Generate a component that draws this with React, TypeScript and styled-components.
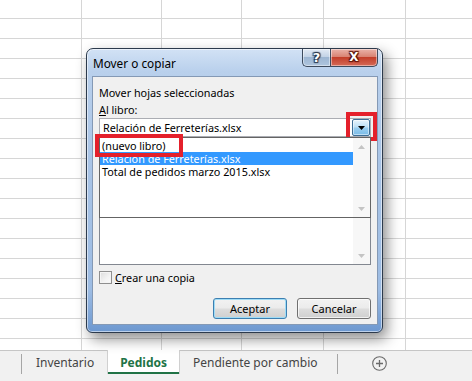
import React from 'react'
import styled, { createGlobalStyle } from 'styled-components'

const GlobalStyle = createGlobalStyle`
    html, body {
        margin: 0;
        padding: 0;
    }
    body {
        width: 472px;
        height: 381px;
        overflow: hidden;
        background: #ffffff;
        font-family: 'Noto Sans', 'Open Sans', sans-serif;
    }
`

const GRID_ROWS = 18
const GRID_COLS = 6

const dropItems = ['(nuevo libro)', 'Relación de Ferreterías.xlsx', 'Total de pedidos marzo 2015.xlsx']

const DownArrow = ({ color = '#000' }: { color?: string }) => (
    <svg width='7' height='4' viewBox='0 0 7 4'>
        <path d='M0 0h7L3.5 4z' fill={color} />
    </svg>
)

const UpArrow = ({ color = '#000' }: { color?: string }) => (
    <svg width='7' height='4' viewBox='0 0 7 4'>
        <path d='M0 4h7L3.5 0z' fill={color} />
    </svg>
)

const App = () => {
    return (
        <>
            <GlobalStyle />
            <Sheet>
                <Grid>
                    {Array.from({ length: GRID_ROWS * GRID_COLS }).map((_, i) => (
                        <Cell key={i} />
                    ))}
                </Grid>
                <TabBar>
                    <TabSeparator />
                    <Tab>Inventario</Tab>
                    <Tab active>Pedidos</Tab>
                    <Tab wide>Pendiente por cambio</Tab>
                    <TabSeparator />
                    <AddSheet>
                        <svg width='15' height='15' viewBox='0 0 15 15'>
                            <circle cx='7.5' cy='7.5' r='6.8' fill='none' stroke='#6a6a6a' strokeWidth='1.1' />
                            <path d='M7.5 4v7M4 7.5h7' stroke='#6a6a6a' strokeWidth='1.3' />
                        </svg>
                    </AddSheet>
                </TabBar>

                <Dialog>
                    <TitleBar>
                        <Title>Mover o copiar</Title>
                        <HelpButton>?</HelpButton>
                        <CloseButton>X</CloseButton>
                    </TitleBar>
                    <Client>
                        <Label>Mover hojas seleccionadas</Label>
                        <Label gap={2}>
                            <u>A</u>l libro:
                        </Label>
                        <Combo>
                            <ComboText>Relación de Ferreterías.xlsx</ComboText>
                            <DropButton>
                                <DownArrow />
                            </DropButton>
                            <Highlight top={-7} left={246} width={31} height={29} />
                        </Combo>
                        <ListArea>
                            <SheetList>
                                <ListBody />
                                <ScrollBar>
                                    <ScrollArrow />
                                    <ScrollArrow>
                                        <DownArrow color='#c4c4c4' />
                                    </ScrollArrow>
                                </ScrollBar>
                            </SheetList>
                            <DropList>
                                <ListBody>
                                    {dropItems.map((item, i) => (
                                        <ListRow key={item} selected={i === 1}>
                                            {item}
                                        </ListRow>
                                    ))}
                                </ListBody>
                                <ScrollBar>
                                    <ScrollArrow>
                                        <UpArrow color='#c4c4c4' />
                                    </ScrollArrow>
                                    <ScrollArrow>
                                        <DownArrow color='#c4c4c4' />
                                    </ScrollArrow>
                                </ScrollBar>
                            </DropList>
                            <Highlight top={-3} left={-4} width={88} height={23} />
                        </ListArea>
                        <CheckRow>
                            <CheckBox />
                            <span>
                                <u>C</u>rear una copia
                            </span>
                        </CheckRow>
                        <ButtonRow>
                            <Button primary>Aceptar</Button>
                            <Button>Cancelar</Button>
                        </ButtonRow>
                    </Client>
                </Dialog>
            </Sheet>
        </>
    )
}

const Sheet = styled.div`
    position: relative;
    width: 472px;
    height: 381px;
    display: flex;
    flex-direction: column;
    overflow: hidden;
`

const Grid = styled.div`
    height: 350px;
    flex: none;
    display: grid;
    grid-template-columns: 82px 80px 80px 82px 82px 1fr;
    grid-template-rows: 19px;
    grid-auto-rows: 20px;
    overflow: hidden;
`

const Cell = styled.div`
    box-sizing: border-box;
    border-right: 1px solid #d6d6d6;
    border-bottom: 1px solid #d6d6d6;
    &:nth-child(6n) {
        border-right: none;
    }
`

const TabBar = styled.div`
    flex: 1;
    display: flex;
    align-items: flex-start;
    padding-left: 21px;
    background: #f1f1f1;
    border-top: 1px solid #c6c6c6;
    box-sizing: border-box;
`

const TabSeparator = styled.div`
    width: 1px;
    height: 20px;
    margin-top: 3px;
    background: #a6a6a6;
`

const Tab = styled.div<{ active?: boolean; wide?: boolean }>`
    height: 24px;
    margin-top: -1px;
    padding: 5px ${(p) => (p.active ? '12px' : p.wide ? '19px' : '14px')} 0
        ${(p) => (p.active ? '12px' : '14px')};
    box-sizing: border-box;
    font-size: 12px;
    line-height: 16px;
    color: ${(p) => (p.active ? '#217346' : '#444444')};
    font-weight: ${(p) => (p.active ? 700 : 400)};
    background: ${(p) => (p.active ? '#ffffff' : 'transparent')};
    border-bottom: ${(p) => (p.active ? '2px solid #217346' : '2px solid transparent')};
    box-shadow: ${(p) => (p.active ? '1px 0 0 #d0d0d0, -1px 0 0 #d0d0d0' : 'none')};
`

const AddSheet = styled.div`
    margin: 5px 0 0 34px;
    display: flex;
`

const Dialog = styled.div`
    position: absolute;
    left: 86px;
    top: 48px;
    width: 297px;
    height: 285px;
    box-sizing: border-box;
    display: flex;
    flex-direction: column;
    padding: 0 4px 7px 5px;
    border: 1px solid #2c3a4c;
    border-radius: 7px 7px 6px 6px;
    background: linear-gradient(180deg, #d2e2f5 0%, #b9d0ec 8%, #a9c4e6 40%, #9dbce3 85%, #6d98d0 100%);
    box-shadow: inset 0 0 0 1px rgba(255, 255, 255, 0.55), 4px 6px 14px rgba(0, 0, 0, 0.45);
`

const TitleBar = styled.div`
    height: 27px;
    flex: none;
    display: flex;
    align-items: flex-start;
`

const Title = styled.div`
    flex: 1;
    padding: 7px 0 0 1px;
    font-size: 11.8px;
    line-height: 15px;
    color: #000000;
`

const CaptionButton = styled.div`
    height: 18px;
    box-sizing: border-box;
    border: 1px solid #3d4b5e;
    border-top: none;
    display: flex;
    align-items: center;
    justify-content: center;
    font-family: 'DejaVu Sans', sans-serif;
    font-weight: 700;
    font-size: 13px;
    line-height: 13px;
    color: #ffffff;
    text-shadow: 0 0 1px #26344a, 1px 1px 1px #26344a, -1px -1px 1px #26344a, 1px -1px 1px #26344a,
        -1px 1px 1px #26344a;
    box-shadow: inset 0 0 0 1px rgba(255, 255, 255, 0.45);
`

const HelpButton = styled(CaptionButton)`
    width: 28px;
    border-right: none;
    border-radius: 0 0 0 5px;
    background: linear-gradient(180deg, #e2eaf4 0%, #c3d3e6 45%, #9db6d2 50%, #aec5de 100%);
`

const CloseButton = styled(CaptionButton)`
    width: 48px;
    border-radius: 0 0 5px 0;
    font-size: 12px;
    background: linear-gradient(180deg, #eab3a9 0%, #d98474 45%, #c33f2a 50%, #d56a58 100%);
    text-shadow: 0 0 1px #5a1208, 1px 1px 1px #5a1208, -1px -1px 1px #5a1208, 1px -1px 1px #5a1208,
        -1px 1px 1px #5a1208;
`

const Client = styled.div`
    flex: 1;
    position: relative;
    display: flex;
    flex-direction: column;
    padding: 8px 6px 0 6px;
    background: #f0f0f0;
    border: 1px solid #8499b5;
    font-size: 10.8px;
    color: #000000;
`

const Label = styled.div<{ gap?: number }>`
    line-height: 15px;
    margin-top: ${(p) => p.gap || 0}px;
`

const Combo = styled.div`
    position: relative;
    margin-top: 1px;
    height: 19px;
    box-sizing: border-box;
    display: flex;
    align-items: center;
    background: #ffffff;
    border: 1px solid #abadb3;
`

const ComboText = styled.div`
    flex: 1;
    padding-left: 3px;
    line-height: 15px;
`

const DropButton = styled.div`
    width: 18px;
    height: 17px;
    box-sizing: border-box;
    display: flex;
    align-items: center;
    justify-content: center;
    border: 1px solid #3c6e96;
    border-radius: 2px;
    background: linear-gradient(180deg, #e7f4fc 0%, #bfe1f6 45%, #98cdef 55%, #7bbce8 100%);
    box-shadow: inset 0 0 0 1px rgba(255, 255, 255, 0.5);
`

const Highlight = styled.div<{ top: number; left: number; width: number; height: number }>`
    position: absolute;
    top: ${(p) => p.top}px;
    left: ${(p) => p.left}px;
    width: ${(p) => p.width}px;
    height: ${(p) => p.height}px;
    box-sizing: border-box;
    border: 4px solid #e4202b;
    pointer-events: none;
`

const ListArea = styled.div`
    position: relative;
`

const SheetList = styled.div`
    height: 128px;
    box-sizing: border-box;
    display: flex;
    background: #ffffff;
    border: 1px solid #828790;
`

const DropList = styled.div`
    position: absolute;
    top: 0;
    left: 0;
    right: 0;
    height: 81px;
    box-sizing: border-box;
    display: flex;
    background: #ffffff;
    border: 1px solid #646464;
`

const ListBody = styled.div`
    flex: 1;
    padding-top: 1px;
`

const ListRow = styled.div<{ selected?: boolean }>`
    height: 13px;
    line-height: 13px;
    padding-left: 2px;
    white-space: nowrap;
    color: ${(p) => (p.selected ? '#ffffff' : '#000000')};
    background: ${(p) => (p.selected ? '#3399ff' : 'transparent')};
`

const ScrollBar = styled.div`
    width: 17px;
    display: flex;
    flex-direction: column;
    justify-content: space-between;
    background: #f7f7f7;
`

const ScrollArrow = styled.div`
    height: 17px;
    display: flex;
    align-items: center;
    justify-content: center;
`

const CheckRow = styled.div`
    margin-top: 5px;
    display: flex;
    align-items: center;
    gap: 3px;
    line-height: 15px;
`

const CheckBox = styled.div`
    width: 13px;
    height: 13px;
    box-sizing: border-box;
    border: 1px solid #8f8f8f;
    background: linear-gradient(135deg, #dcdcdc 0%, #f3f3f3 60%, #fbfbfb 100%);
    box-shadow: inset 0 0 0 1px #f4f4f4;
`

const ButtonRow = styled.div`
    margin-top: 13px;
    display: flex;
    justify-content: flex-end;
    gap: 10px;
`

const Button = styled.div<{ primary?: boolean }>`
    width: 74px;
    height: 21px;
    box-sizing: border-box;
    display: flex;
    align-items: center;
    justify-content: center;
    border: 1px solid ${(p) => (p.primary ? '#3c7fb1' : '#707070')};
    border-radius: 3px;
    background: linear-gradient(180deg, #f2f2f2 0%, #ebebeb 48%, #dddddd 52%, #cfcfcf 100%);
    box-shadow: inset 0 0 0 1px ${(p) => (p.primary ? '#9fdcf6' : 'rgba(255, 255, 255, 0.7)')};
    font-size: 11px;
`

export default App
